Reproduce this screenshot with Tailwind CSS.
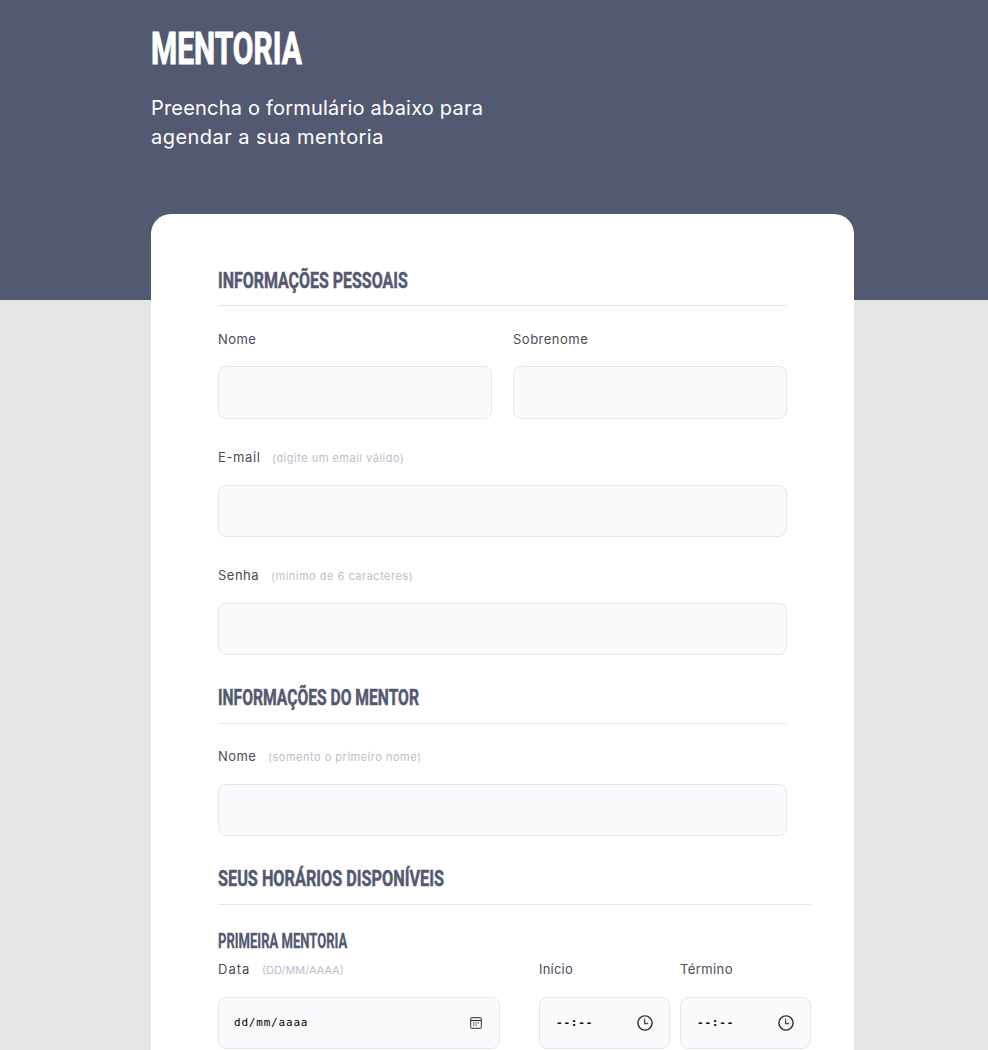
<!DOCTYPE html>
<html lang="pt-BR">
<head>
<meta charset="utf-8">
<title>Mentoria</title>
<script src="https://cdn.jsdelivr.net/npm/@tailwindcss/browser@4"></script>
</head>
<body class="bg-[#e5e5e5] font-['Inter',sans-serif]">
<div class="h-[1050px] overflow-hidden bg-linear-to-b from-[#535971] from-[300px] to-[#e5e5e5] to-[300px]">
  <div class="ml-[151px] w-[703px]">
    <header class="h-[214px] pt-[27px] text-white">
      <h1 class="h-11 origin-left scale-x-[.68] whitespace-nowrap font-['Roboto',sans-serif] text-[44px] leading-[44px] font-bold [-webkit-text-stroke:1px_white]">MENTORIA</h1>
      <p class="mt-[23px] text-[20px] leading-[29px]"><span class="tracking-[.2px]">Preencha o formulário abaixo para</span><br><span class="tracking-[.45px]">agendar a sua mentoria</span></p>
    </header>
    <form class="h-[900px] rounded-t-[20px] bg-white px-[67px] pt-10 text-[13px] leading-[18px] tracking-[.4px] text-[#4e4958]">
      <section class="w-[569px]">
        <h2 class="h-[52px] border-b border-[#e6e6f0] font-['Roboto',sans-serif] text-[22.5px] leading-[52px] font-bold tracking-normal text-[#535971] [-webkit-text-stroke:.5px_#535971]"><span class="inline-block origin-left scale-x-[.709] whitespace-nowrap">INFORMAÇÕES PESSOAIS</span></h2>
        <div class="mt-6 flex gap-[21px]">
          <div class="flex-1">
            <label class="block h-5">Nome</label>
            <div class="mt-4 h-[53px] rounded-lg border border-[#e6e6f0] bg-[#fafafc]"></div>
          </div>
          <div class="flex-1">
            <label class="block h-5 tracking-[.5px]">Sobrenome</label>
            <div class="mt-4 h-[53px] rounded-lg border border-[#e6e6f0] bg-[#fafafc]"></div>
          </div>
        </div>
        <label class="mt-[29px] flex h-5"><span class="w-[54px] tracking-[.6px]">E-mail</span><span class="text-[11px] leading-5 tracking-[.5px] text-[#c1bccc]">(digite um email válido)</span></label>
        <div class="mt-[17px] h-[52px] rounded-lg border border-[#e6e6f0] bg-[#fafafc]"></div>
        <label class="mt-[29px] flex h-5"><span class="w-[53px] tracking-[.5px]">Senha</span><span class="text-[11px] leading-5 tracking-[.5px] text-[#c1bccc]">(mínimo de 6 caracteres)</span></label>
        <div class="mt-[17px] h-[52px] rounded-lg border border-[#e6e6f0] bg-[#fafafc]"></div>
      </section>
      <section class="mt-[17px] w-[569px]">
        <h2 class="h-[52px] border-b border-[#e6e6f0] font-['Roboto',sans-serif] text-[22.5px] leading-[50px] font-bold tracking-normal text-[#535971] [-webkit-text-stroke:.5px_#535971]"><span class="inline-block origin-left scale-x-[.695] whitespace-nowrap">INFORMAÇÕES DO MENTOR</span></h2>
        <label class="mt-[23px] flex h-5"><span class="w-[50px]">Nome</span><span class="text-[11px] leading-5 tracking-[.5px] text-[#c1bccc]">(somento o primeiro nome)</span></label>
        <div class="mt-[17px] h-[52px] rounded-lg border border-[#e6e6f0] bg-[#fafafc]"></div>
      </section>
      <section class="mt-[17px] w-[593px]">
        <h2 class="h-[52px] border-b border-[#e6e6f0] font-['Roboto',sans-serif] text-[22.5px] leading-[50px] font-bold tracking-normal text-[#535971] [-webkit-text-stroke:.5px_#535971]"><span class="inline-block origin-left scale-x-[.722] whitespace-nowrap">SEUS HORÁRIOS DISPONÍVEIS</span></h2>
        <h3 class="mt-[27px] h-5 origin-left scale-x-[.669] whitespace-nowrap font-['Roboto',sans-serif] text-[19.5px] leading-5 font-bold tracking-normal text-[#535971] [-webkit-text-stroke:.3px_#535971]">PRIMEIRA MENTORIA</h3>
        <div class="mt-[8px] flex">
          <div class="w-[282px]">
            <label class="flex h-5"><span class="w-11 tracking-[1px]">Data</span><span class="text-[11px] leading-5 tracking-normal text-[#c1bccc]">(DD/MM/AAAA)</span></label>
            <div class="mt-[17px] flex h-[52px] items-center justify-between rounded-lg border border-[#e6e6f0] bg-[#fafafc] pr-[17px] pl-[15px]">
              <span class="font-['DejaVu_Sans_Mono',monospace] text-[11px] tracking-[.8px] text-black">dd/mm/aaaa</span>
              <svg class="size-3" viewBox="0 0 12 12" fill="none" stroke="#555"><rect x=".6" y=".6" width="10.8" height="10.8" rx="1.6" stroke-width="1.2"/><path d="M1 3.5h10" stroke="#222"/><path d="M3 5.9h1.4M5.3 5.9h1.4M7.6 5.9H9M3 8.1h1.4M5.3 8.1h1.4" stroke-width="1.4"/></svg>
            </div>
          </div>
          <div class="ml-[39px] w-[131px]">
            <label class="block h-5 tracking-[.2px]">Início</label>
            <div class="mt-[17px] flex h-[52px] items-center justify-between rounded-lg border border-[#e6e6f0] bg-[#fafafc] px-[16px]">
              <span class="font-['DejaVu_Sans_Mono',monospace] text-[11px] font-bold tracking-[.8px] text-black">--:--</span>
              <svg class="size-4" viewBox="0 0 16 16" fill="none" stroke="#2a2a2a"><circle cx="8" cy="8" r="7.1" stroke-width="1.4"/><path d="M7.6 3.5v5h3.6" stroke="#555" stroke-width="1.3"/></svg>
            </div>
          </div>
          <div class="ml-[10px] w-[131px]">
            <label class="block h-5">Término</label>
            <div class="mt-[17px] flex h-[52px] items-center justify-between rounded-lg border border-[#e6e6f0] bg-[#fafafc] px-[16px]">
              <span class="font-['DejaVu_Sans_Mono',monospace] text-[11px] font-bold tracking-[.8px] text-black">--:--</span>
              <svg class="size-4" viewBox="0 0 16 16" fill="none" stroke="#2a2a2a"><circle cx="8" cy="8" r="7.1" stroke-width="1.4"/><path d="M7.6 3.5v5h3.6" stroke="#555" stroke-width="1.3"/></svg>
            </div>
          </div>
        </div>
      </section>
    </form>
  </div>
</div>
</body>
</html>
